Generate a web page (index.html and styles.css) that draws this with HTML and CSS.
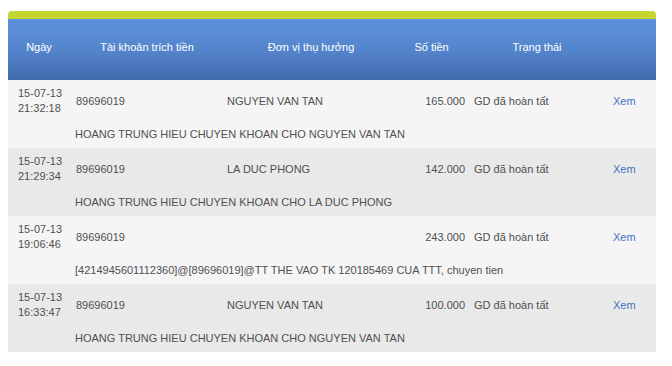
FILE: index.html
```html
<!DOCTYPE html>
<html lang="vi">
<head>
<meta charset="utf-8">
<title>Lịch sử giao dịch</title>
<link rel="stylesheet" href="styles.css">
</head>
<body>
<div class="history">
  <div class="topbar"></div>
  <div class="head">
    <div>Ngày</div>
    <div>Tài khoản trích tiền</div>
    <div>Đơn vị thụ hưởng</div>
    <div>Số tiền</div>
    <div>Trạng thái</div>
    <div></div>
  </div>

  <div class="row light">
    <div class="date">15-07-13<br>21:32:18</div>
    <div class="cell acct">89696019</div>
    <div class="cell name">NGUYEN VAN TAN</div>
    <div class="cell amount">165.000</div>
    <div class="cell status">GD đã hoàn tất</div>
    <div class="cell action"><a href="#">Xem</a></div>
    <div class="desc">HOANG TRUNG HIEU CHUYEN KHOAN CHO NGUYEN VAN TAN</div>
  </div>

  <div class="row dark">
    <div class="date">15-07-13<br>21:29:34</div>
    <div class="cell acct">89696019</div>
    <div class="cell name">LA DUC PHONG</div>
    <div class="cell amount">142.000</div>
    <div class="cell status">GD đã hoàn tất</div>
    <div class="cell action"><a href="#">Xem</a></div>
    <div class="desc">HOANG TRUNG HIEU CHUYEN KHOAN CHO LA DUC PHONG</div>
  </div>

  <div class="row light">
    <div class="date">15-07-13<br>19:06:46</div>
    <div class="cell acct">89696019</div>
    <div class="cell name"></div>
    <div class="cell amount">243.000</div>
    <div class="cell status">GD đã hoàn tất</div>
    <div class="cell action"><a href="#">Xem</a></div>
    <div class="desc">[4214945601112360]@[89696019]@TT THE VAO TK 120185469 CUA TTT, chuyen tien</div>
  </div>

  <div class="row dark">
    <div class="date">15-07-13<br>16:33:47</div>
    <div class="cell acct">89696019</div>
    <div class="cell name">NGUYEN VAN TAN</div>
    <div class="cell amount">100.000</div>
    <div class="cell status">GD đã hoàn tất</div>
    <div class="cell action"><a href="#">Xem</a></div>
    <div class="desc">HOANG TRUNG HIEU CHUYEN KHOAN CHO NGUYEN VAN TAN</div>
  </div>
</div>
</body>
</html>
```

FILE: styles.css
```css
html, body {
  background: #ffffff;
}
body {
  margin: 0;
  padding: 11px 8px 8px 8px;
  font-family: "Liberation Sans", Arial, sans-serif;
  font-size: 11px;
  color: #505050;
}
.history {
  width: 648px;
}
.topbar {
  height: 8px;
  background: #c3d631;
  border-radius: 4px 4px 0 0;
}
.head {
  display: grid;
  grid-template-columns: 62px 154px 174px 67px 144px 47px;
  height: 61px;
  box-sizing: border-box;
  padding-bottom: 5px;
  align-items: center;
  text-align: center;
  color: #ffffff;
  background: linear-gradient(to bottom, #5e92dd 0%, #5485cc 50%, #4169ad 100%);
  line-height: 14px;
}
.row {
  display: grid;
  grid-template-columns: 62px 154px 174px 67px 144px 47px;
  grid-template-rows: 38px auto;
  height: 68px;
  box-sizing: border-box;
  line-height: 14px;
  align-content: start;
}
.row.light { background: #f5f5f5; }
.row.dark { background: #e9e9e9; }
.date {
  padding: 6px 0 0 10px;
  line-height: 15px;
}
.cell {
  align-self: center;
  padding-top: 4px;
  white-space: nowrap;
}
.acct { padding-left: 6px; }
.name { padding-left: 3px; }
.amount { text-align: right; }
.status { padding-left: 9px; }
.action { padding-left: 4px; }
.action a {
  color: #4173c4;
  text-decoration: none;
}
.desc {
  grid-column: 2 / -1;
  padding: 9px 0 0 5px;
  white-space: nowrap;
}
```
